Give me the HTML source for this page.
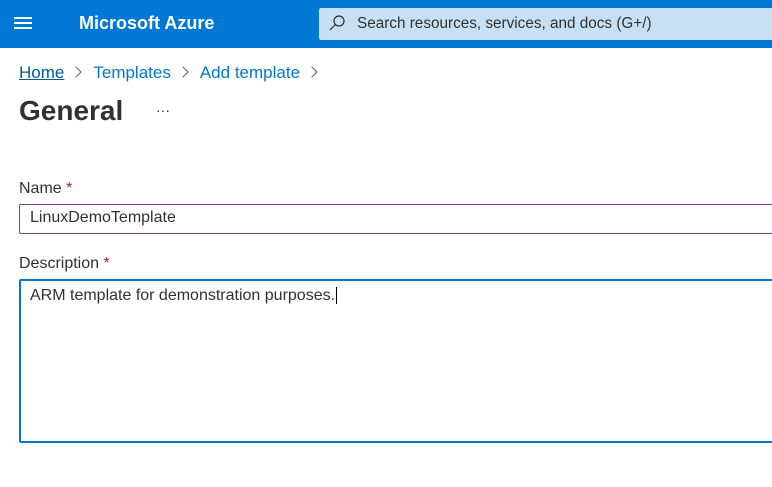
<!DOCTYPE html>
<html><head><style>
body{margin:0;width:772px;height:487px;background:#fff;font-family:"Liberation Sans",sans-serif;position:relative;overflow:hidden}
.top{position:absolute;left:0;top:0;width:772px;height:48px;background:#0078d4}
.abs{position:absolute;white-space:nowrap}
.chev{display:inline-block;width:7px;height:7px;border-right:1.3px solid #605e5c;border-top:1.3px solid #605e5c;transform:rotate(45deg);margin:0 13px 2px 8px}
</style></head><body>
<div class="top"></div>
<div class="abs" style="left:14px;top:17px;width:18px;height:2px;background:#fff;box-shadow:0 5px 0 #fff,0 10px 0 #fff"></div>
<div class="abs" style="left:79px;top:13px;color:#fff;font-size:18px;font-weight:bold">Microsoft Azure</div>
<div class="abs" style="left:319px;top:8px;width:453px;height:32px;background:#c7e0f4;border-radius:2px 0 0 2px"></div>
<svg class="abs" style="left:328px;top:14px" width="18" height="18" viewBox="0 0 18 18"><circle cx="11" cy="7" r="5" fill="none" stroke="#323130" stroke-width="1.2"/><path d="M7.5 10.5L2 16" stroke="#323130" stroke-width="1.2"/></svg>
<div class="abs" style="left:357px;top:15px;color:#323130;font-size:15.3px">Search resources, services, and docs (G+/)</div>
<div class="abs" style="left:19px;top:63px;font-size:17px;color:#0078d4"><span style="color:#005a9e;text-decoration:underline">Home</span><span class="chev"></span>Templates<span class="chev"></span>Add template<span class="chev"></span></div>
<div class="abs" style="left:19px;top:95px;font-size:28px;font-weight:bold;color:#323130">General</div>
<div class="abs" style="left:156px;top:102px;font-size:14px;color:#323130">···</div>
<div class="abs" style="left:19px;top:180px;font-size:16px;color:#323130">Name <span style="color:#a4262c">*</span></div>
<div class="abs" style="left:19px;top:204px;width:760px;height:28px;border:1px solid #8a3f8f;border-radius:2px"></div>
<div class="abs" style="left:30px;top:209px;font-size:16px;color:#323130">LinuxDemoTemplate</div>
<div class="abs" style="left:19px;top:255px;font-size:16px;color:#323130">Description <span style="color:#a4262c">*</span></div>
<div class="abs" style="left:19px;top:279px;width:760px;height:164px;border:2px solid #0078d4;box-sizing:border-box;border-radius:2px"></div>
<div class="abs" style="left:30px;top:287px;font-size:16px;color:#323130">ARM template for demonstration purposes.<span style="border-left:1px solid #000;margin-left:1px"></span></div>
</body></html>
